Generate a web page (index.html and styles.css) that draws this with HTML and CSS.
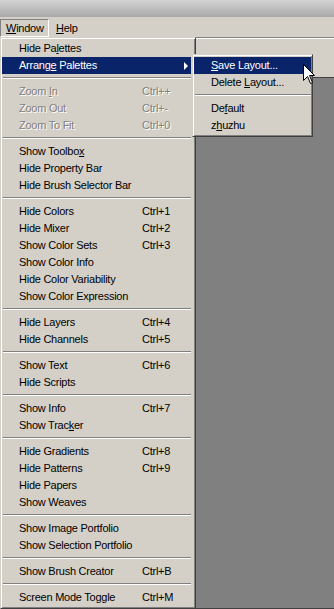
FILE: index.html
```html
<!DOCTYPE html>
<html lang="en">
<head>
<meta charset="UTF-8" />
<meta name="viewport" content="width=device-width, initial-scale=1" />
<title>Window menu</title>
<link rel="stylesheet" href="styles.css">
</head>
<body>

<div class="topstrip"></div>

<div class="menubar">
  <div class="menubar-item open">
    <span><u>W</u>indow</span>

    <div class="menu">
      <div class="item"><span>Hide Pa<u>l</u>ettes</span></div>
      <div class="item active has-sub">
        <span>Arrang<u>e</u> Palettes</span>
        <span class="arrow"></span>
        <div class="menu submenu">
          <div class="item active"><span><u>S</u>ave Layout...</span></div>
          <div class="item"><span>Delete <u>L</u>ayout...</span></div>
          <div class="sep"></div>
          <div class="item"><span>De<u>f</u>ault</span></div>
          <div class="item"><span>z<u>h</u>uzhu</span></div>
        </div>
      </div>
      <div class="sep"></div>
      <div class="item disabled"><span>Zoom <u>I</u>n</span><span>Ctrl++</span></div>
      <div class="item disabled"><span>Zoom Out</span><span>Ctrl+-</span></div>
      <div class="item disabled"><span>Zoom To Fit</span><span>Ctrl+0</span></div>
      <div class="sep"></div>
      <div class="item"><span>Show Toolbo<u>x</u></span></div>
      <div class="item"><span>Hide Property Bar</span></div>
      <div class="item"><span>Hide Brush Selector Bar</span></div>
      <div class="sep"></div>
      <div class="item"><span>Hide Colors</span><span>Ctrl+1</span></div>
      <div class="item"><span>Hide Mixer</span><span>Ctrl+2</span></div>
      <div class="item"><span>Show Color Sets</span><span>Ctrl+3</span></div>
      <div class="item"><span>Show Color Info</span></div>
      <div class="item"><span>Hide Color Variability</span></div>
      <div class="item"><span>Show Color Expression</span></div>
      <div class="sep"></div>
      <div class="item"><span>Hide Layers</span><span>Ctrl+4</span></div>
      <div class="item"><span>Hide Channels</span><span>Ctrl+5</span></div>
      <div class="sep"></div>
      <div class="item"><span>Show Text</span><span>Ctrl+6</span></div>
      <div class="item"><span>Hide Scripts</span></div>
      <div class="sep"></div>
      <div class="item"><span>Show Info</span><span>Ctrl+7</span></div>
      <div class="item"><span>Show Trac<u>k</u>er</span></div>
      <div class="sep"></div>
      <div class="item"><span>Hide Gradients</span><span>Ctrl+8</span></div>
      <div class="item"><span>Hide Patterns</span><span>Ctrl+9</span></div>
      <div class="item"><span>Hide Papers</span></div>
      <div class="item"><span>Show Weaves</span></div>
      <div class="sep"></div>
      <div class="item"><span>Show Image Portfolio</span></div>
      <div class="item"><span>Show Selection Portfolio</span></div>
      <div class="sep"></div>
      <div class="item"><span>Show Brush Creator</span><span>Ctrl+B</span></div>
      <div class="sep"></div>
      <div class="item"><span>Screen Mode Toggle</span><span>Ctrl+M</span></div>
    </div>
  </div>
  <div class="menubar-item"><span><u>H</u>elp</span></div>
</div>

<div class="toolbar"></div>
<div class="client"></div>

<svg class="cursor" width="13" height="21" viewBox="0 0 13 21">
  <path d="M0.5 0.5 L0.5 16.5 L4.5 12.5 L7.5 19.5 L9.5 18.5 L6.5 11.5 L11.5 11.5 Z" fill="#fff" stroke="#000" stroke-width="1" />
</svg>

</body>
</html>
```

FILE: styles.css
```css
/* base */
* {
  box-sizing: border-box;
}
html, body {
  height: 100%;
}
body {
  margin: 0;
  display: flex;
  flex-direction: column;
  overflow: hidden;
  background: #d4d0c8;
  font-family: Tahoma, 'Liberation Sans', Arial, sans-serif;
  font-size: 11px;
  letter-spacing: -0.25px;
  color: #000;
  position: relative;
}
u {
  text-decoration: underline;
  text-underline-offset: 1px;
}

.topstrip {
  height: 17px;
  flex: none;
  background: linear-gradient(#d2d2d2, #a9a9a9);
}

/* menubar */
.menubar {
  height: 20px;
  flex: none;
  display: flex;
  align-items: flex-start;
  padding-top: 2px;
  background: #d4d0c8;
  position: relative;
  z-index: 2;
}
.menubar-item {
  height: 18px;
  line-height: 16px;
  padding: 0 6px;
  border: 1px solid transparent;
  position: relative;
}
.menubar-item.open {
  width: 49px;
  padding-left: 5px;
  border-color: #808080 #fff #fff #808080;
}

/* dropdowns */
.menu {
  position: absolute;
  top: 17px;
  left: -1px;
  width: 196px;
  background: #d4d0c8;
  border: 1px solid;
  border-color: #d4d0c8 #404040 #404040 #d4d0c8;
  box-shadow: inset 1px 1px #fff, inset -1px -1px #808080;
  padding: 2px 4px 2px 1px;
  line-height: 17px;
  white-space: nowrap;
}
.item {
  height: 17px;
  display: grid;
  grid-template-columns: 1fr 49px;
  padding-left: 17px;
  position: relative;
}
.item.active {
  background: #0a246a;
  color: #fff;
}
.item.disabled {
  color: #808080;
  text-shadow: 1px 1px #fff;
}
.sep {
  height: 0;
  margin: 3px 0 4px 1px;
  border-top: 1px solid #808080;
  border-bottom: 1px solid #fff;
}
.arrow {
  justify-self: end;
  align-self: center;
  margin-right: 3px;
  width: 0;
  height: 0;
  border-left: 4px solid #000;
  border-top: 4px solid transparent;
  border-bottom: 4px solid transparent;
}
.item.active .arrow {
  border-left-color: #fff;
}

.submenu {
  top: -3px;
  left: calc(100% + 1px);
  width: 121px;
  padding: 2px 1px;
  color: #000;
}
.submenu .item {
  grid-template-columns: 1fr;
}

/* background panels */
.toolbar {
  height: 40px;
  flex: none;
  border-top: 1px solid #808080;
  box-shadow: inset 0 1px #fff;
  background: #d4d0c8;
}
.client {
  flex: 1;
  background: #808080;
  border-top: 1px solid #404040;
  border-bottom: 1px solid #404040;
}

.cursor {
  position: absolute;
  left: 303px;
  top: 64px;
  z-index: 5;
}
```
